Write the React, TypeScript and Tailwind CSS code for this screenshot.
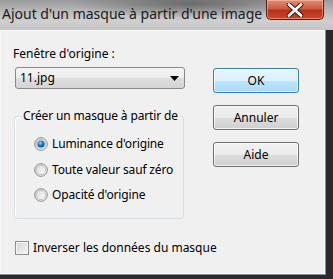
import React from "react";

function Radio({ checked }: { checked?: boolean }) {
  return (
    <svg width="14" height="14" viewBox="0 0 14 14" className="shrink-0">
      <defs>
        <linearGradient id="rg" x1="0" y1="0" x2="1" y2="1">
          <stop offset="0" stopColor="#d6d6d6" />
          <stop offset="1" stopColor="#ffffff" />
        </linearGradient>
        <radialGradient id="dot" cx="0.4" cy="0.35" r="0.7">
          <stop offset="0" stopColor="#8fd3ff" />
          <stop offset="0.5" stopColor="#1f7ec4" />
          <stop offset="1" stopColor="#0d3e6b" />
        </radialGradient>
      </defs>
      <circle cx="7" cy="7" r="6.3" fill="url(#rg)" stroke="#8a8a8a" strokeWidth="1" />
      <circle cx="7" cy="7" r="4.6" fill="none" stroke="#c4c4c4" strokeWidth="1" />
      {checked && <circle cx="7" cy="7" r="3.6" fill="url(#dot)" />}
    </svg>
  );
}

export default function App() {
  const font = { fontFamily: '"Noto Sans", "DejaVu Sans", sans-serif' };
  return (
    <div
      className="w-[333px] h-[279px] overflow-hidden flex flex-col bg-[#2a2a2e] text-[12px] text-black whitespace-nowrap"
      style={font}
    >
      {/* Title bar */}
      <div className="h-[30px] shrink-0 flex items-start bg-[linear-gradient(180deg,#9a9a9a_0%,#b8b8b8_35%,#cfcfcf_70%,#c4c4c4_100%)] relative">
        <div className="absolute inset-0 bg-[radial-gradient(ellipse_120px_14px_at_190px_4px,rgba(60,60,60,0.55),transparent)]" />
        <div className="relative pl-[2px] pt-[4px] text-[14px] leading-[20px] text-[#1a1a1a] tracking-[0px]">
          Ajout d'un masque à partir d'une image
        </div>
        <div className="relative ml-auto mr-[9px] w-[58px] h-[20px] shrink-0 rounded-b-[5px] border border-[#5a1d12] border-t-0 bg-[linear-gradient(180deg,#e0907a_0%,#d05a3e_45%,#b8321b_55%,#c8472c_100%)] flex items-center justify-center shadow-[inset_0_0_0_1px_rgba(255,200,180,0.5)]">
          <svg width="20" height="14" viewBox="0 0 20 14">
            <path
              d="M4 1.5 L16 12.5 M16 1.5 L4 12.5"
              stroke="#3a1208"
              strokeWidth="4.6"
              strokeLinecap="round"
            />
            <path
              d="M4 1.5 L16 12.5 M16 1.5 L4 12.5"
              stroke="#ffffff"
              strokeWidth="2.8"
              strokeLinecap="round"
            />
          </svg>
        </div>
      </div>

      {/* Body */}
      <div className="flex flex-1">
        <div className="w-[325px] h-[244px] bg-[#f0f0f0] border border-[#fbfbfb] border-l-[#f6f6f6] outline outline-1 outline-[#8a8a8e] flex flex-col pl-[12px]">
          <div className="flex">
            {/* left column */}
            <div className="w-[172px] flex flex-col">
              <div className="mt-[15px] h-[16px] leading-[16px]">Fenêtre d'origine :</div>
              <div className="mt-[5px] ml-[2px] h-[22px] w-[170px] rounded-[3px] border border-[#8a8a8a] bg-[linear-gradient(180deg,#f4f4f4_0%,#ececec_50%,#dedede_51%,#d4d4d4_100%)] flex items-center pl-[4px] pr-[5px]">
                <span className="leading-[16px]">11.jpg</span>
                <svg className="ml-auto" width="9" height="5" viewBox="0 0 9 5">
                  <path d="M0 0 H9 L4.5 5 Z" fill="#000" />
                </svg>
              </div>
              {/* group box */}
              <div className="mt-[27px] ml-[1px] w-[170px] h-[103px] rounded-[3px] border border-[#d5dfe5] shadow-[inset_1px_1px_0_#ffffff] relative flex flex-col pl-[19px] pt-[19px] tracking-[-0.15px]">
                <div className="absolute -top-[9px] left-[6px] px-[2px] bg-[#f0f0f0] leading-[16px]">
                  Créer un masque à partir de
                </div>
                <div className="flex items-center gap-[4px] h-[16px]">
                  <Radio checked />
                  <span>Luminance d'origine</span>
                </div>
                <div className="flex items-center gap-[4px] h-[16px] mt-[10px]">
                  <Radio />
                  <span>Toute valeur sauf zéro</span>
                </div>
                <div className="flex items-center gap-[4px] h-[16px] mt-[9px]">
                  <Radio />
                  <span>Opacité d'origine</span>
                </div>
              </div>
            </div>
            {/* buttons */}
            <div className="ml-[28px] mt-[37px] flex flex-col gap-[12px]">
              <div className="w-[86px] h-[25px] rounded-[3px] border border-[#3c7fb1] bg-[linear-gradient(180deg,#eaf6fd_0%,#d9f0fc_50%,#bee6fd_51%,#a7d9f5_100%)] shadow-[inset_0_0_0_1px_rgba(255,255,255,0.7)] flex items-center justify-center">
                OK
              </div>
              <div className="w-[86px] h-[25px] rounded-[3px] border border-[#707070] bg-[linear-gradient(180deg,#f2f2f2_0%,#ebebeb_50%,#dddddd_51%,#cfcfcf_100%)] shadow-[inset_0_0_0_1px_rgba(255,255,255,0.7)] flex items-center justify-center">
                Annuler
              </div>
              <div className="w-[86px] h-[25px] rounded-[3px] border border-[#707070] bg-[linear-gradient(180deg,#f2f2f2_0%,#ebebeb_50%,#dddddd_51%,#cfcfcf_100%)] shadow-[inset_0_0_0_1px_rgba(255,255,255,0.7)] flex items-center justify-center">
                Aide
              </div>
            </div>
          </div>
          {/* checkbox */}
          <div className="mt-[21px] ml-[2px] flex items-center gap-[4px]">
            <div className="w-[14px] h-[14px] border border-[#8e8f8f] bg-[linear-gradient(135deg,#d4d4d4,#f6f6f6)] shadow-[inset_0_0_0_1px_#f4f4f4]" />
            <span className="leading-[16px]">Inverser les données du masque</span>
          </div>
        </div>
      </div>
    </div>
  );
}
